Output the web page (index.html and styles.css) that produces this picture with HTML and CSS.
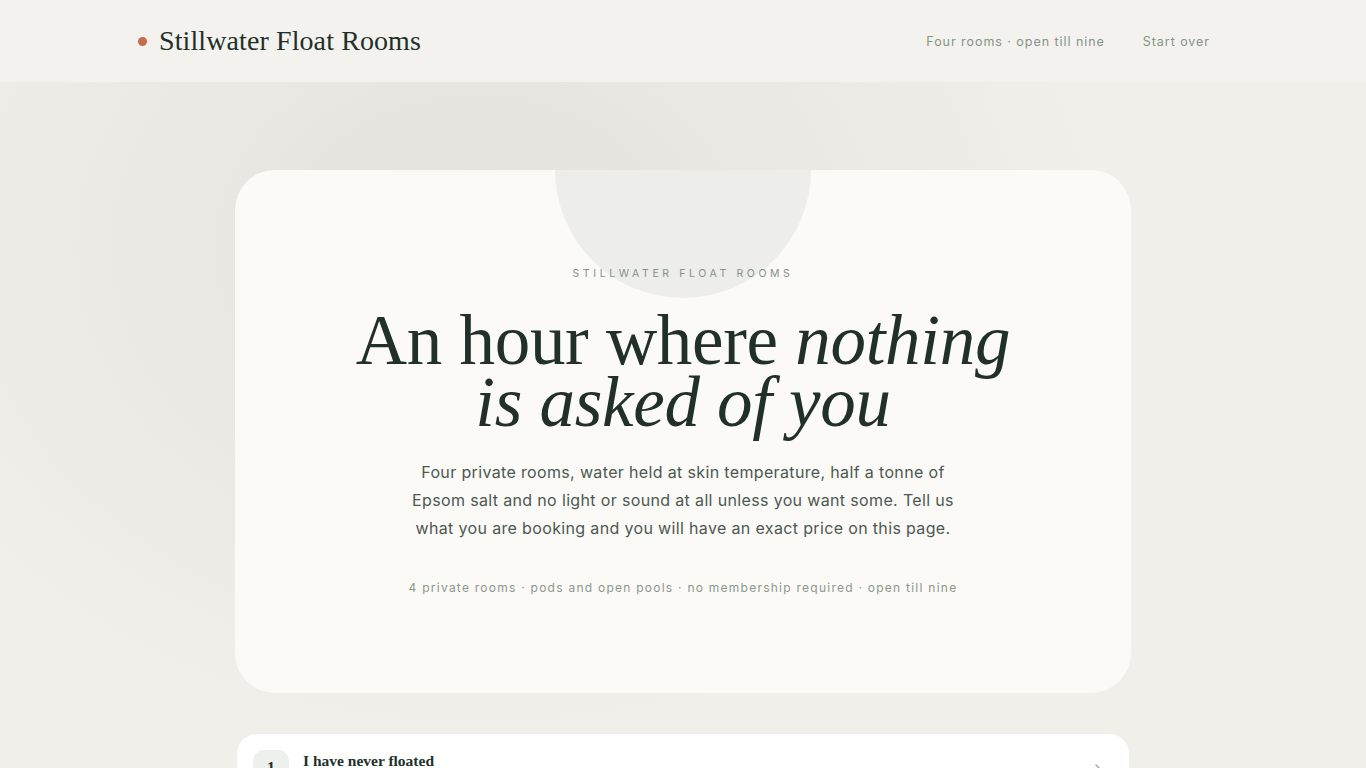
FILE: index.html
```html
<!DOCTYPE html>
<html lang="en">
<head>
<meta charset="utf-8">
<title>Stillwater Float Rooms</title>
<link rel="stylesheet" href="styles.css">
</head>
<body>
<header class="site-header">
  <div class="header-inner">
    <div class="brand">
      <span class="brand-dot"></span>
      <span class="brand-name">Stillwater Float Rooms</span>
    </div>
    <nav class="nav">
      <span class="nav-item">Four rooms · open till nine</span>
      <a class="nav-item nav-link" href="#">Start over</a>
    </nav>
  </div>
</header>
<main class="main">
  <section class="hero">
    <div class="hero-circle"></div>
    <div class="hero-content">
      <p class="eyebrow">Stillwater Float Rooms</p>
      <h1 class="hero-title">An hour where <em>nothing</em><br><em>is asked of you</em></h1>
      <p class="hero-text">Four private rooms, water held at skin temperature, half a tonne of Epsom salt and no light or sound at all unless you want some. Tell us what you are booking and you will have an exact price on this page.</p>
      <p class="hero-meta">4 private rooms · pods and open pools · no membership required · open till nine</p>
    </div>
  </section>
  <section class="option">
    <span class="option-badge">1</span>
    <div class="option-body">
      <h2 class="option-title">I have never floated</h2>
      <p class="option-sub">A first session with a full walkthrough before you go in</p>
    </div>
    <svg class="option-chevron" width="14" height="14" viewBox="0 0 14 14" fill="none"><path d="M5 3l4 4-4 4" stroke="#9aaba1" stroke-width="1.5" stroke-linecap="round" stroke-linejoin="round"/></svg>
  </section>
</main>
</body>
</html>
```
FILE: styles.css
```css
* { box-sizing: border-box; }
html, body { margin: 0; padding: 0; }
body {
  min-height: 100vh;
  background-color: #f1efea;
  background-image:
    radial-gradient(ellipse 900px 700px at 35% 30%, rgba(224,223,218,0.85), rgba(224,223,218,0) 70%);
  font-family: "Inter", "Liberation Sans", sans-serif;
  color: #223029;
  overflow: hidden;
}
.site-header {
  height: 82px;
  background: #f3f2ee;
}
.header-inner {
  width: 1090px;
  margin: 0 auto;
  height: 100%;
  display: flex;
  align-items: center;
  justify-content: space-between;
}
.brand { display: flex; align-items: center; gap: 12px; }
.brand-dot {
  width: 9px; height: 9px; border-radius: 50%;
  background: #c76c4a;
}
.brand-name {
  font-family: "Liberation Serif", serif;
  font-size: 28px;
  color: #223029;
  letter-spacing: 0.1px;
}
.nav { display: flex; align-items: center; gap: 38px; padding-right: 18px; }
.nav-item {
  font-size: 12.5px;
  letter-spacing: 0.95px;
  color: #859488;
  text-decoration: none;
}
.main {
  padding-top: 88px;
  display: flex;
  flex-direction: column;
  align-items: center;
  gap: 39px;
}
.hero {
  position: relative;
  width: 896px;
  height: 523px;
  border-radius: 40px;
  background: #fbfaf7;
  overflow: hidden;
}
.hero-circle {
  position: absolute;
  left: 320px;
  top: -128px;
  width: 256px;
  height: 256px;
  border-radius: 50%;
  background: #edeee9;
}
.hero-content {
  position: relative;
  padding-top: 97px;
  display: flex;
  flex-direction: column;
  align-items: center;
  text-align: center;
}
.eyebrow {
  margin: 0;
  font-size: 10.5px;
  letter-spacing: 3.6px;
  text-transform: uppercase;
  color: #849288;
}
.hero-title {
  margin: 29px 0 0;
  font-family: "Liberation Serif", serif;
  font-weight: 400;
  font-size: 71px;
  line-height: 62px;
  letter-spacing: -0.3px;
  color: #22302a;
}
.hero-title em { font-style: italic; }
.hero-text {
  margin: 25px 0 0;
  width: 552px;
  font-size: 16px;
  line-height: 28px;
  color: #4c5852;
  letter-spacing: 0.35px;
}
.hero-meta {
  margin: 38px 0 0;
  font-size: 12px;
  letter-spacing: 1.25px;
  color: #8a988e;
}
.option {
  width: 896px;
  min-height: 90px;
  background: #ffffff;
  border: 2px solid #f0efeb;
  border-radius: 22px;
  display: flex;
  align-items: flex-start;
  gap: 14px;
  padding: 16px 24px 16px 16px;
}
.option-badge {
  flex: none;
  width: 36px; height: 36px;
  border-radius: 11px;
  background: #eef0ec;
  display: flex; align-items: center; justify-content: center;
  font-family: "Liberation Serif", serif;
  font-weight: 700;
  font-size: 16px;
  color: #22302a;
}
.option-body { flex: 1; }
.option-title {
  margin: 2px 0 0;
  font-family: "Liberation Serif", serif;
  font-weight: 700;
  font-size: 15.5px;
  color: #22302a;
}
.option-sub { margin: 4px 0 0; font-size: 13px; color: #6b7770; }
.option-chevron { margin-top: 12px; }
```
